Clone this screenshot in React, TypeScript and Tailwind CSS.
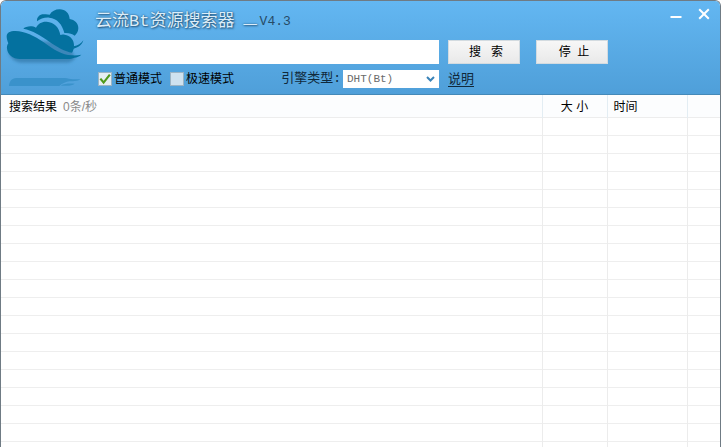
import React, { useState } from 'react';

const ROW_COUNT = 19;
const rows = Array.from({ length: ROW_COUNT }, (_, i) => i);

function CloudLogo() {
  return (
    <svg viewBox="3 3 282 276" className="h-[92px] w-[94px] shrink-0" aria-hidden="true">
      <defs>
        <filter id="cloudShadow" x="-10%" y="-10%" width="120%" height="140%">
          <feGaussianBlur stdDeviation="5" />
        </filter>
      </defs>
      <path
        d="M24 150c4 24 20 38 42 38h136c10 0 18-6 24-14l-26-50H60Z"
        fill="#2c6f9e"
        opacity="0.6"
        filter="url(#cloudShadow)"
      />
      {/* back cloud */}
      <path
        d="M111 64C110 51 119 43 131 43c7-1 13 0 18 1 6-10 17-16 30-16 17 0 29 12 30 29 15 2 26 13 26 27 0 9-4 17-11 23-8-6-18-9-31-8-6-26-22-44-45-46-15-1-27 3-37 11Z"
        fill="#04719f"
      />
      {/* front cloud, upper part */}
      <path
        d="M70 86c8-7 25-10 38-3 6-12 18-19 32-18 23 2 37 16 41 40 4-2 8-2 13-1 17 2 29 16 28 33 0 8-2 15-6 21-20-3-45-17-68-33-25-18-50-34-78-39Z"
        fill="#04719f"
      />
      {/* front cloud, lower part */}
      <path
        d="M20 109C20 98 30 93 46 93c29 1 57 14 85 34 32 23 55 38 84 39 10 1 20 0 29-2-6 5-13 8-21 9-6 2-12 4-20 4H60c-22 0-37-14-39-31-1-6 1-12 4-16-3-7-5-14-5-21Z"
        fill="#04719f"
      />
      <path d="M221 139c13-2 22-8 29-18-3 13-15 22-31 26Z" fill="#04719f" />
      {/* reflection */}
      <path
        d="M27 258c1-12 7-24 22-24h145c10 0 16 4 24 4h24c-10 6-24 6-34 6-10 1-20 6-30 14Zm155-1c10-6 24-7 42-6-6 4-14 6-24 6Z"
        fill="#3a92cb"
      />
    </svg>
  );
}

function TitleBar() {
  return (
    <div className="flex h-9 items-start justify-between">
      <h1 className="flex items-center pt-1.5 font-['Liberation_Mono','Noto_Sans_CJK_SC',monospace] text-[17px] leading-6 text-[#dcedf9] [text-shadow:1px_1px_2px_#24557c,0_0_2px_#24557c]">
        <span>云流Bt资源搜索器</span>
        <span className="ml-2 font-['Noto_Sans_CJK_SC',sans-serif]">—</span>
        <span className="ml-0.5 text-[13px] text-[#274b66] [text-shadow:none]">V4.3</span>
      </h1>
      <div className="flex gap-2 pr-1.5">
        <button type="button" aria-label="最小化" className="flex h-5 w-5 items-center justify-center">
          <svg viewBox="0 0 12 12" className="h-3 w-3" stroke="#fff" strokeWidth="2">
            <path d="M0.5 9h11" />
          </svg>
        </button>
        <button type="button" aria-label="关闭" className="flex h-5 w-5 items-center justify-center">
          <svg viewBox="0 0 12 12" className="h-3 w-3" stroke="#fff" strokeWidth="2">
            <path d="M1.2 1.2l9.6 9.6M10.8 1.2L1.2 10.8" />
          </svg>
        </button>
      </div>
    </div>
  );
}

interface ModeCheckboxProps {
  label: string;
  checked: boolean;
  onChange: (checked: boolean) => void;
}

function ModeCheckbox({ label, checked, onChange }: ModeCheckboxProps) {
  return (
    <label className="flex items-center gap-0.5">
      <span className="relative h-3.5 w-3.5">
        <input
          type="checkbox"
          checked={checked}
          onChange={(e) => onChange(e.target.checked)}
          className="block h-3.5 w-3.5 appearance-none border border-[#9cb4c4] bg-[#cfe2ef] checked:bg-[#e6eef2]"
        />
        {checked && (
          <svg viewBox="0 0 13 13" className="pointer-events-none absolute inset-0" fill="none" stroke="#4f9a1c" strokeWidth="2">
            <path d="M2.2 6.2l3 3.6L11 2.4" />
          </svg>
        )}
      </span>
      {label}
    </label>
  );
}

function SearchForm() {
  const [keyword, setKeyword] = useState('');
  const [normal, setNormal] = useState(true);
  const [fast, setFast] = useState(false);

  return (
    <form className="mr-28" onSubmit={(e) => e.preventDefault()}>
      <div className="flex pl-0.5">
        <input
          type="text"
          aria-label="关键词"
          value={keyword}
          onChange={(e) => setKeyword(e.target.value)}
          className="h-6 min-w-0 flex-1 bg-white px-1 outline-none"
        />
        <button
          type="submit"
          className="ml-[9px] h-6 w-[72px] border border-[#d3dbe0] bg-linear-to-b from-[#f7f7f7] to-[#e9e9e9] pl-1 whitespace-pre"
        >
          搜   索
        </button>
        <button
          type="button"
          className="ml-4 h-6 w-[72px] border border-[#d3dbe0] bg-linear-to-b from-[#f7f7f7] to-[#e9e9e9] pl-1 whitespace-pre"
        >
          停  止
        </button>
      </div>
      <div className="mt-1.5 flex h-[18px] items-center pl-[3px]">
        <div className="flex flex-1 gap-2">
          <ModeCheckbox label="普通模式" checked={normal} onChange={setNormal} />
          <ModeCheckbox label="极速模式" checked={fast} onChange={setFast} />
        </div>
        <label htmlFor="engine" className="mr-0.5 font-['Liberation_Mono','Noto_Sans_CJK_SC',monospace] text-[13px] text-[#10293b]">
          引擎类型:
        </label>
        <div className="relative mr-[9px] h-[18px] w-24">
          <select
            id="engine"
            className="block h-full w-full appearance-none bg-white pl-1 font-['Liberation_Mono',monospace] text-[11px] leading-4 text-[#6b6b6b] outline-none"
          >
            <option>DHT(Bt)</option>
          </select>
          <svg viewBox="0 0 9 6" className="pointer-events-none absolute top-1.5 right-1 h-1.5 w-[9px]" fill="none" stroke="#3a83b8" strokeWidth="2">
            <path d="M1 1l3.5 3.5L8 1" />
          </svg>
        </div>
        <div className="w-40">
          <a href="#help" className="border-b border-[#10293b] text-[13px] leading-4 text-[#10293b]">
            说明
          </a>
        </div>
      </div>
    </form>
  );
}

function ResultTable() {
  return (
    <table className="w-full table-fixed border-collapse text-left">
      <colgroup>
        <col />
        <col className="w-[65px]" />
        <col className="w-20" />
        <col className="w-[33px]" />
      </colgroup>
      <thead>
        <tr className="h-[22px] border-b border-[#ededed] bg-[#fcfdfe]">
          <th className="border-r border-[#e3edf3] p-0 pt-0.5 pl-2 font-normal">
            搜索结果<span className="ml-1.5 text-[#8a8a8a]">0条/秒</span>
          </th>
          <th className="border-r border-[#e3edf3] p-0 pt-0.5 text-center font-normal">大 小</th>
          <th className="border-r border-[#e3edf3] p-0 pt-0.5 pl-1.5 font-normal">时间</th>
          <th className="p-0" />
        </tr>
      </thead>
      <tbody>
        {rows.map((row) => (
          <tr key={row} className="h-[18px] border-b border-[#eeeeee]">
            <td className="border-r border-[#ececec] p-0" />
            <td className="border-r border-[#ececec] p-0" />
            <td className="border-r border-[#ececec] p-0" />
            <td className="p-0" />
          </tr>
        ))}
      </tbody>
    </table>
  );
}

export default function App() {
  return (
    <div className="flex h-screen flex-col overflow-hidden rounded-t-md border-x border-t border-[#6f7b84] bg-white font-['Liberation_Sans','Noto_Sans_CJK_SC',sans-serif] text-xs leading-4 text-black">
      <header className="flex h-[94px] shrink-0 border-b border-[#4489b8] bg-linear-to-b from-[#63b7f2] to-[#4f9fd9]">
        <CloudLogo />
        <div className="min-w-0 flex-1 pt-[3px]">
          <TitleBar />
          <SearchForm />
        </div>
      </header>
      <main className="min-h-0 flex-1 overflow-hidden">
        <ResultTable />
      </main>
    </div>
  );
}
